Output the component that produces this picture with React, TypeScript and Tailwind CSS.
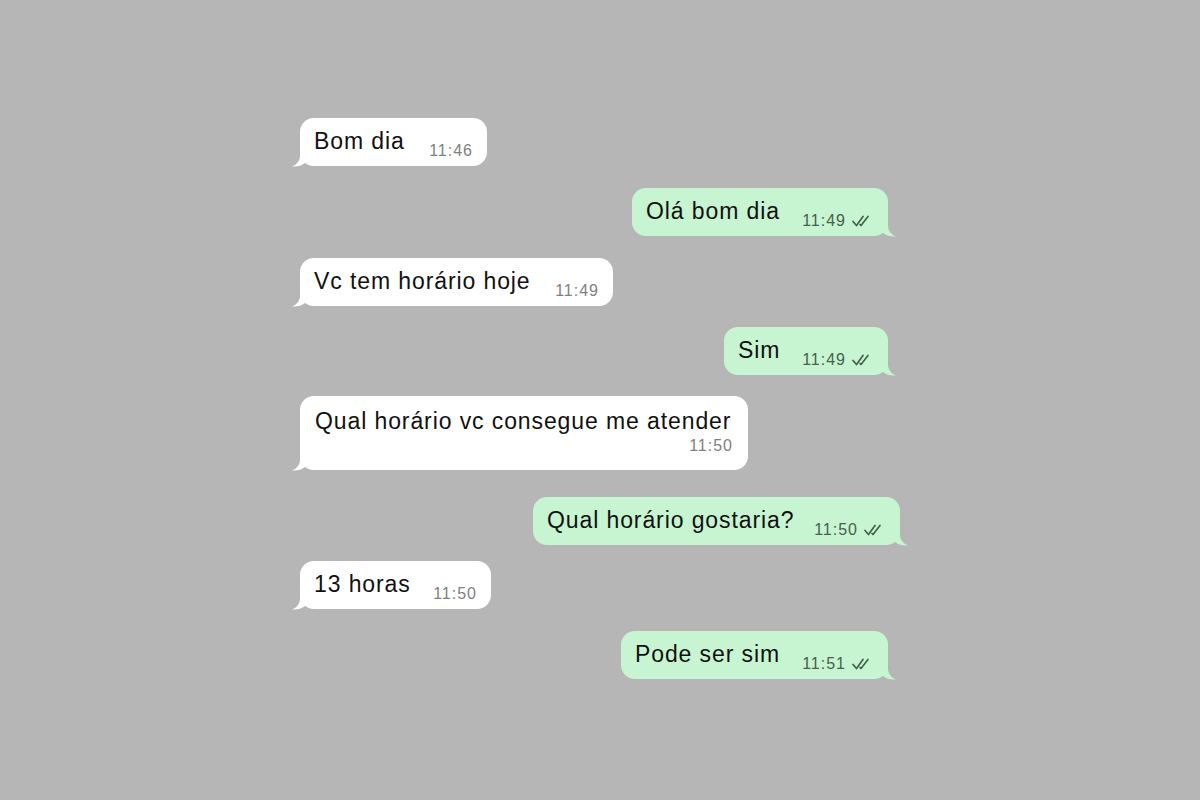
type Message = {
  id: number;
  text: string;
  time: string;
  mine: boolean;
  box: string; // width + spacing above
  tall?: boolean;
};

const messages: Message[] = [
  { id: 1, text: 'Bom dia', time: '11:46', mine: false, box: 'w-[187px]' },
  { id: 2, text: 'Olá bom dia', time: '11:49', mine: true, box: 'w-[256px] mt-[22px]' },
  { id: 3, text: 'Vc tem horário hoje', time: '11:49', mine: false, box: 'w-[313px] mt-[22px]' },
  { id: 4, text: 'Sim', time: '11:49', mine: true, box: 'w-[164px] mt-[21px]' },
  { id: 5, text: 'Qual horário vc consegue me atender', time: '11:50', mine: false, box: 'w-[448px] mt-[21px]', tall: true },
  { id: 6, text: 'Qual horário gostaria?', time: '11:50', mine: true, box: 'w-[367px] mt-[27px] -mr-[12px]' },
  { id: 7, text: '13 horas', time: '11:50', mine: false, box: 'w-[191px] mt-[16px]' },
  { id: 8, text: 'Pode ser sim', time: '11:51', mine: true, box: 'w-[267px] mt-[22px]' },
];

function Tail({ mine }: { mine: boolean }) {
  return (
    <svg
      width="20"
      height="22"
      viewBox="0 0 20 22"
      className={
        mine
          ? 'absolute -right-[8px] -bottom-[1px] -scale-x-100'
          : 'absolute -left-[8px] -bottom-[1px]'
      }
    >
      <path
        d="M8 0 V11 Q8 18 0 21.5 Q8 22 13 18 L20 18 V0 Z"
        fill={mine ? '#c8f5d1' : '#ffffff'}
      />
    </svg>
  );
}

function DoubleCheck() {
  return (
    <svg width="22" height="12" viewBox="0 0 22 12" fill="none" stroke="#45604d" strokeWidth="1.7" strokeLinecap="round" strokeLinejoin="round">
      <path d="M1 6.5 L4.5 10.5 L11 1.5" />
      <path d="M8 9.5 L9 10.5 L16 1.5" />
    </svg>
  );
}

function Bubble({ m }: { m: Message }) {
  const bg = m.mine ? 'bg-[#c8f5d1]' : 'bg-white';
  const timeColor = m.mine ? 'text-[#45604d]' : 'text-[#808080]';

  return (
    <div className={`relative rounded-[14px] ${bg} ${m.box} ${m.mine ? 'self-end' : 'self-start'}`}>
      <Tail mine={m.mine} />
      {m.tall ? (
        <div className="relative flex h-[74px] flex-col px-[15px] pt-[11px]">
          <span className="text-[23px] leading-[28px] tracking-[0.9px] text-[#111]">{m.text}</span>
          <span className={`mt-[2px] self-end text-[16px] leading-[18px] tracking-[1px] ${timeColor}`}>{m.time}</span>
        </div>
      ) : (
        <div className="relative flex h-[48px] items-start justify-between pl-[14px] pr-[14px] pt-[9px]">
          <span className="text-[23px] leading-[28px] tracking-[0.9px] text-[#111]">{m.text}</span>
          <span className={`mt-[15px] flex items-center gap-[6px] text-[16px] leading-[18px] tracking-[1px] ${timeColor}`}>
            {m.time}
            {m.mine && <DoubleCheck />}
          </span>
        </div>
      )}
    </div>
  );
}

export default function App() {
  return (
    <div
      className="h-[800px] w-[1200px] overflow-hidden bg-[#b6b6b6] pt-[118px]"
      style={{ fontFamily: '"Liberation Sans", Arial, sans-serif' }}
    >
      <div className="ml-[300px] flex w-[588px] flex-col">
        {messages.map((m) => (
          <Bubble key={m.id} m={m} />
        ))}
      </div>
    </div>
  );
}
